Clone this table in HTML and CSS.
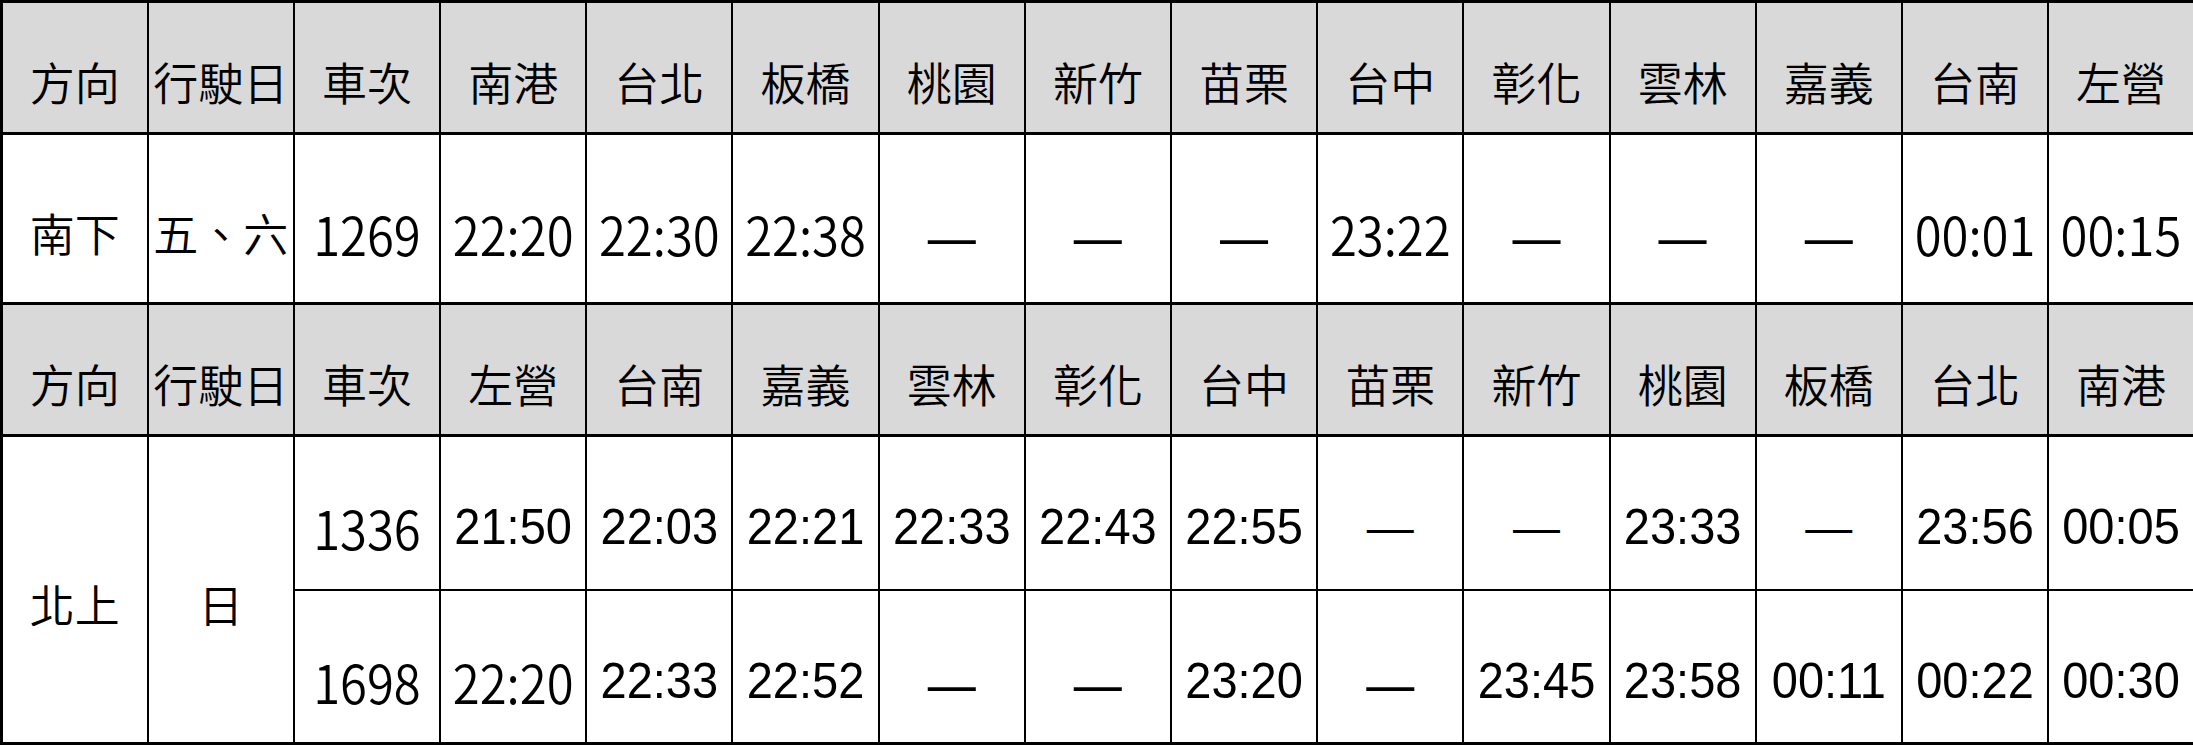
FILE: index.html
```html
<!DOCTYPE html>
<html lang="zh-Hant">
<head>
<meta charset="utf-8">
<title>高鐵加開班次</title>
<link rel="stylesheet" href="styles.css">
</head>
<body>
<table class="tt">
  <colgroup>
    <col><col><col><col><col><col><col><col><col><col><col><col><col><col><col>
  </colgroup>
  <tr class="hd">
    <th>方向</th><th>行駛日</th><th>車次</th><th>南港</th><th>台北</th><th>板橋</th><th>桃園</th><th>新竹</th><th>苗栗</th><th>台中</th><th>彰化</th><th>雲林</th><th>嘉義</th><th>台南</th><th>左營</th>
  </tr>
  <tr class="r-south">
    <td class="zh">南下</td>
    <td class="zh">五、六</td>
    <td><span class="jh">1269</span></td>
    <td><span class="jh">22:20</span></td>
    <td><span class="jh">22:30</span></td>
    <td><span class="jh">22:38</span></td>
    <td class="dk">—</td>
    <td class="dk">—</td>
    <td class="dk">—</td>
    <td><span class="jh">23:22</span></td>
    <td class="dk">—</td>
    <td class="dk">—</td>
    <td class="dk">—</td>
    <td><span class="jh">00:01</span></td>
    <td><span class="jh">00:15</span></td>
  </tr>
  <tr class="hd">
    <th>方向</th><th>行駛日</th><th>車次</th><th>左營</th><th>台南</th><th>嘉義</th><th>雲林</th><th>彰化</th><th>台中</th><th>苗栗</th><th>新竹</th><th>桃園</th><th>板橋</th><th>台北</th><th>南港</th>
  </tr>
  <tr class="r-north">
    <td class="zh" rowspan="2">北上</td>
    <td class="zh" rowspan="2">日</td>
    <td><span class="jh">1336</span></td>
    <td><span class="ar">21:50</span></td>
    <td><span class="ar">22:03</span></td>
    <td><span class="ar">22:21</span></td>
    <td><span class="ar">22:33</span></td>
    <td><span class="ar">22:43</span></td>
    <td><span class="ar">22:55</span></td>
    <td class="dn">—</td>
    <td class="dn">—</td>
    <td><span class="ar">23:33</span></td>
    <td class="dn">—</td>
    <td><span class="ar">23:56</span></td>
    <td><span class="ar">00:05</span></td>
  </tr>
  <tr class="r-north">
    <td><span class="jh">1698</span></td>
    <td><span class="jh">22:20</span></td>
    <td><span class="ar">22:33</span></td>
    <td><span class="ar">22:52</span></td>
    <td class="dk">—</td>
    <td class="dk">—</td>
    <td><span class="ar">23:20</span></td>
    <td class="dk">—</td>
    <td><span class="ar">23:45</span></td>
    <td><span class="ar">23:58</span></td>
    <td><span class="ar">00:11</span></td>
    <td><span class="ar">00:22</span></td>
    <td><span class="ar">00:30</span></td>
  </tr>
</table>
</body>
</html>
```
FILE: styles.css
```css
html, body {
  margin: 0;
  padding: 0;
  background: #ffffff;
}

.tt {
  width: 2193px;
  table-layout: fixed;
  border-collapse: collapse;
  border: 3px solid #000;
  color: #000;
  font-family: "Noto Sans CJK TC", "Noto Sans CJK SC", sans-serif;
}

.tt col {
  width: 146.2px;
}

.tt th,
.tt td {
  border: 2px solid #000;
  padding: 28px 0 0 0;
  text-align: center;
  vertical-align: middle;
  line-height: 1;
  white-space: nowrap;
  overflow: hidden;
}

.tt th {
  background: #d9d9d9;
  font-weight: 350;
  font-size: 45px;
  border-top-width: 3px;
  border-bottom-width: 3px;
}

.hd {
  height: 132px;
}

.r-south {
  height: 170px;
}

.r-north {
  height: 154px;
}

.zh {
  font-size: 45px;
  font-weight: 350;
}

.jh {
  display: inline-block;
  font-family: "Noto Sans CJK TC", sans-serif;
  font-size: 49px;
  font-weight: 350;
  transform: scaleY(1.09);
}

.ar {
  display: inline-block;
  font-family: "Liberation Sans", Arial, sans-serif;
  font-size: 47px;
  transform: scaleY(1.06);
}

.dk {
  font-family: "Noto Sans CJK TC", sans-serif;
  font-size: 60px;
  font-weight: 400;
  padding-top: 8px;
}

.dn {
  font-family: "Liberation Sans", Arial, sans-serif;
  font-size: 47px;
}
```
